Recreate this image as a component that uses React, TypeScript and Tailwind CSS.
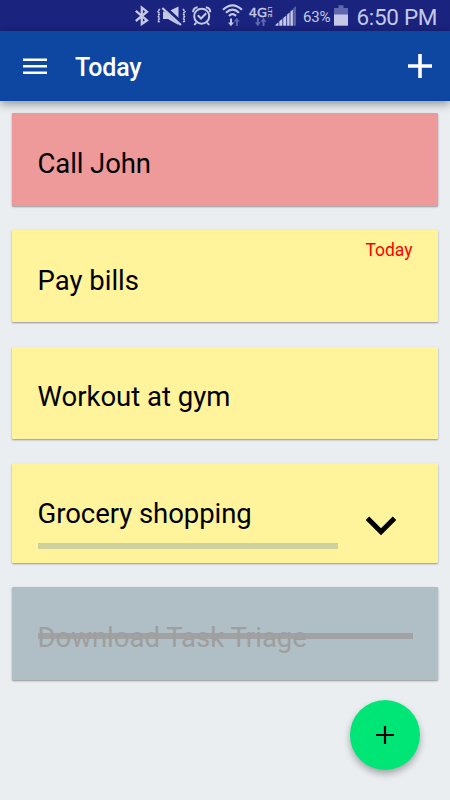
import React from "react";

const C = "#c5c8e6";
const DIM = "#6068b0";

function StatusBar() {
  return (
    <div className="flex h-[31px] w-full items-start bg-[#1a237e] pl-[134px] text-[#c5c8e6]">
      <svg width="16" height="31" viewBox="134 0 16 31" className="shrink-0" fill="none" stroke={C} strokeWidth="2.3">
        <path d="M135.8 10.800L147 20.300L141.800 24V7.700L147 11.700L135.800 21" />
      </svg>
      <svg width="38" height="31" viewBox="150 0 38 31" className="shrink-0" fill={C}>
        <path d="M163 11.500h5l10.500-5v18.500l-10.500-6h-5z" />
        <path d="M163.500 7L182 24" stroke="#1a237e" strokeWidth="4.500" />
        <path d="M162.300 8L181 25" stroke={C} strokeWidth="2.200" />
        <g fill="none" stroke={C} strokeWidth="1.700">
          <path d="M159.800 9l-2 2.500 2 2-2 2.500 2 2-2 2.500 2 2" strokeDasharray="2.200 0.900" />
          <path d="M183 9l2 2.500-2 2 2 2.500-2 2 2 2.500-2 2" strokeDasharray="2.200 0.900" />
        </g>
      </svg>
      <svg width="30" height="31" viewBox="188 0 30 31" className="shrink-0" fill="none" stroke={C} strokeWidth="2">
        <circle cx="201.700" cy="16.200" r="7.500" />
        <path d="M193.200 12.300Q192.900 7.800 197.600 7.200M205.800 7.200Q210.500 7.800 210.200 12.300M196.300 22.500l-2 2.500M207.100 22.500l2 2.500" />
        <path d="M197.800 15.300l3.200 3.200 5.200-5.200" />
      </svg>
      <svg width="30" height="31" viewBox="218 0 30 31" className="shrink-0" fill="none" stroke={C} strokeWidth="2.200">
        <path d="M223 9.700Q232.500 1 242 9.700M226 12.800Q232.500 6.600 239 12.800M229 15.900Q232.500 12.300 236 15.900" />
        <path d="M231 18.500v5" strokeWidth="2" />
        <path d="M228 22.500h6l-3 3.800z" fill={C} stroke="none" />
        <path d="M236.800 21v5" stroke={DIM} strokeWidth="2" />
        <path d="M233.800 21.500h6l-3-3.800z" fill={DIM} stroke="none" />
      </svg>
      <svg width="26" height="31" viewBox="248 0 26 31" className="shrink-0" fill={C}>
        <text x="248.700" y="17" fontSize="12.500" fontWeight="400" textLength="18.500" lengthAdjust="spacingAndGlyphs" fontFamily="'DejaVu Sans', sans-serif" stroke={C} strokeWidth="0.400">4G</text>
        <text transform="translate(267.700 6.800) rotate(90)" fontSize="5.800" fontWeight="700" textLength="10.500" lengthAdjust="spacingAndGlyphs" fontFamily="Roboto, sans-serif">LTE</text>
        <g fill={DIM}>
          <path d="M256.900 18h2v4.300h2l-3 3.900-3-3.900h2z" />
          <path d="M262.500 26h2v-4.300h2l-3-3.900-3 3.900h2z" />
        </g>
      </svg>
      <svg width="28" height="31" viewBox="274 0 28 31" className="shrink-0" fill={C}>
        <path d="M275.500 25.800v-1l3-2.500v3.500zM279.300 25.800v-4.500l3.100-2.600v7.100zM283.200 25.800V18l3.100-2.600v10.400zM287.100 25.800V14.500l2.500-2.100v13.400zM290.400 25.800V11.500l2.500-2.100v16.400z" />
        <path d="M293.300 25.800V8.500l2.500-2.500v19.800z" fill={DIM} />
      </svg>
      <span className="mt-[7px] w-[32px] shrink-0 pl-[1px] text-[15px] leading-5 tracking-[-0.2px]">63%</span>
      <svg width="14" height="31" viewBox="334 0 14 31" className="shrink-0">
        <path d="M338.500 5.300h5v2.700h4.500v7h-14V8h4.500z" fill={DIM} />
        <path d="M334 14.500h14v11.200h-14z" fill={C} />
      </svg>
      <span className="ml-[8.500px] mt-[3px] shrink-0 whitespace-nowrap text-[22.500px] leading-7 tracking-[-0.300px]">6:50 PM</span>
    </div>
  );
}

function Card({ className = "", children }: { className?: string; children: React.ReactNode }) {
  return (
    <div className={"w-full rounded-[1px] px-[25.5px] shadow-[0_1px_2px_rgba(0,0,0,0.38)] " + className}>
      {children}
    </div>
  );
}

export default function App() {
  return (
    <div className="relative flex h-[800px] w-[450px] flex-col overflow-hidden bg-[#eaeef1] font-['Roboto',sans-serif] text-black">
      <StatusBar />
      <header className="z-10 flex h-[70px] shrink-0 items-center bg-[#0d47a1] pl-[23px] pr-[18px] text-white shadow-[0_3px_9px_rgba(0,0,0,0.38)]">
        <svg width="24" height="17" viewBox="0 0 24 17" fill="white">
          <path d="M0 .5h24v2.500H0zM0 7h24v2.500H0zM0 13.500h24V16H0z" />
        </svg>
        <h1 className="ml-[28px] mt-[3px] text-[25px] font-medium leading-8 tracking-[-0.2px]">Today</h1>
        <svg width="24" height="24" viewBox="0 0 24 24" fill="white" className="ml-auto">
          <path d="M10.200 0h3.600v10.200H24v3.600H13.800V24h-3.600V13.800H0v-3.600h10.200z" />
        </svg>
      </header>
      <main className="flex flex-col gap-[24.2px] px-[12px] pt-[12.4px] text-[27.5px] leading-8">
        <Card className="h-[92.5px] bg-[#ef9a9a] pt-[34.3px] tracking-[-0.1px]">Call John</Card>
        <Card className="flex h-[92.3px] justify-between bg-[#fff49c]">
          <span className="pt-[35px]">Pay bills</span>
          <span className="pt-[9.8px] text-[17.5px] leading-5 text-[#ff0000]">Today</span>
        </Card>
        <Card className="h-[92.5px] bg-[#fff49c] pt-[34.3px]">Workout at gym</Card>
        <Card className="flex h-[99.8px] bg-[#fff49c]">
          <div className="w-[300px] pt-[34.7px]">
            <div className="tracking-[-0.05px]">Grocery shopping</div>
            <div className="mt-[13px] h-[6px] bg-[#ced19e]" />
          </div>
          <svg width="32" height="20" viewBox="0 0 32 20" className="ml-[28px] mt-[52.8px]" fill="none" stroke="black" strokeWidth="5">
            <path d="M1.500 2.300L15 15.800L28.500 2.300" />
          </svg>
        </Card>
        <Card className="h-[92.5px] bg-[#b0bec5] pt-[34.6px] text-[#9e9e9e]">
          <div className="relative">
            Download Task Triage
            <div className="absolute left-0 top-[11.5px] h-[6px] w-full bg-[#9e9e9e]/90" />
          </div>
        </Card>
      </main>
      <button aria-label="Add task" className="absolute left-[350px] top-[700px] flex h-[70px] w-[70px] items-center justify-center rounded-full bg-[#00e676] shadow-[0_4px_7px_rgba(0,0,0,0.3)]">
        <svg width="18" height="18" viewBox="0 0 18 18" fill="black">
          <path d="M7.900 0h2.200v7.900H18v2.200h-7.900V18H7.900v-7.900H0V7.900h7.900z" />
        </svg>
      </button>
    </div>
  );
}
